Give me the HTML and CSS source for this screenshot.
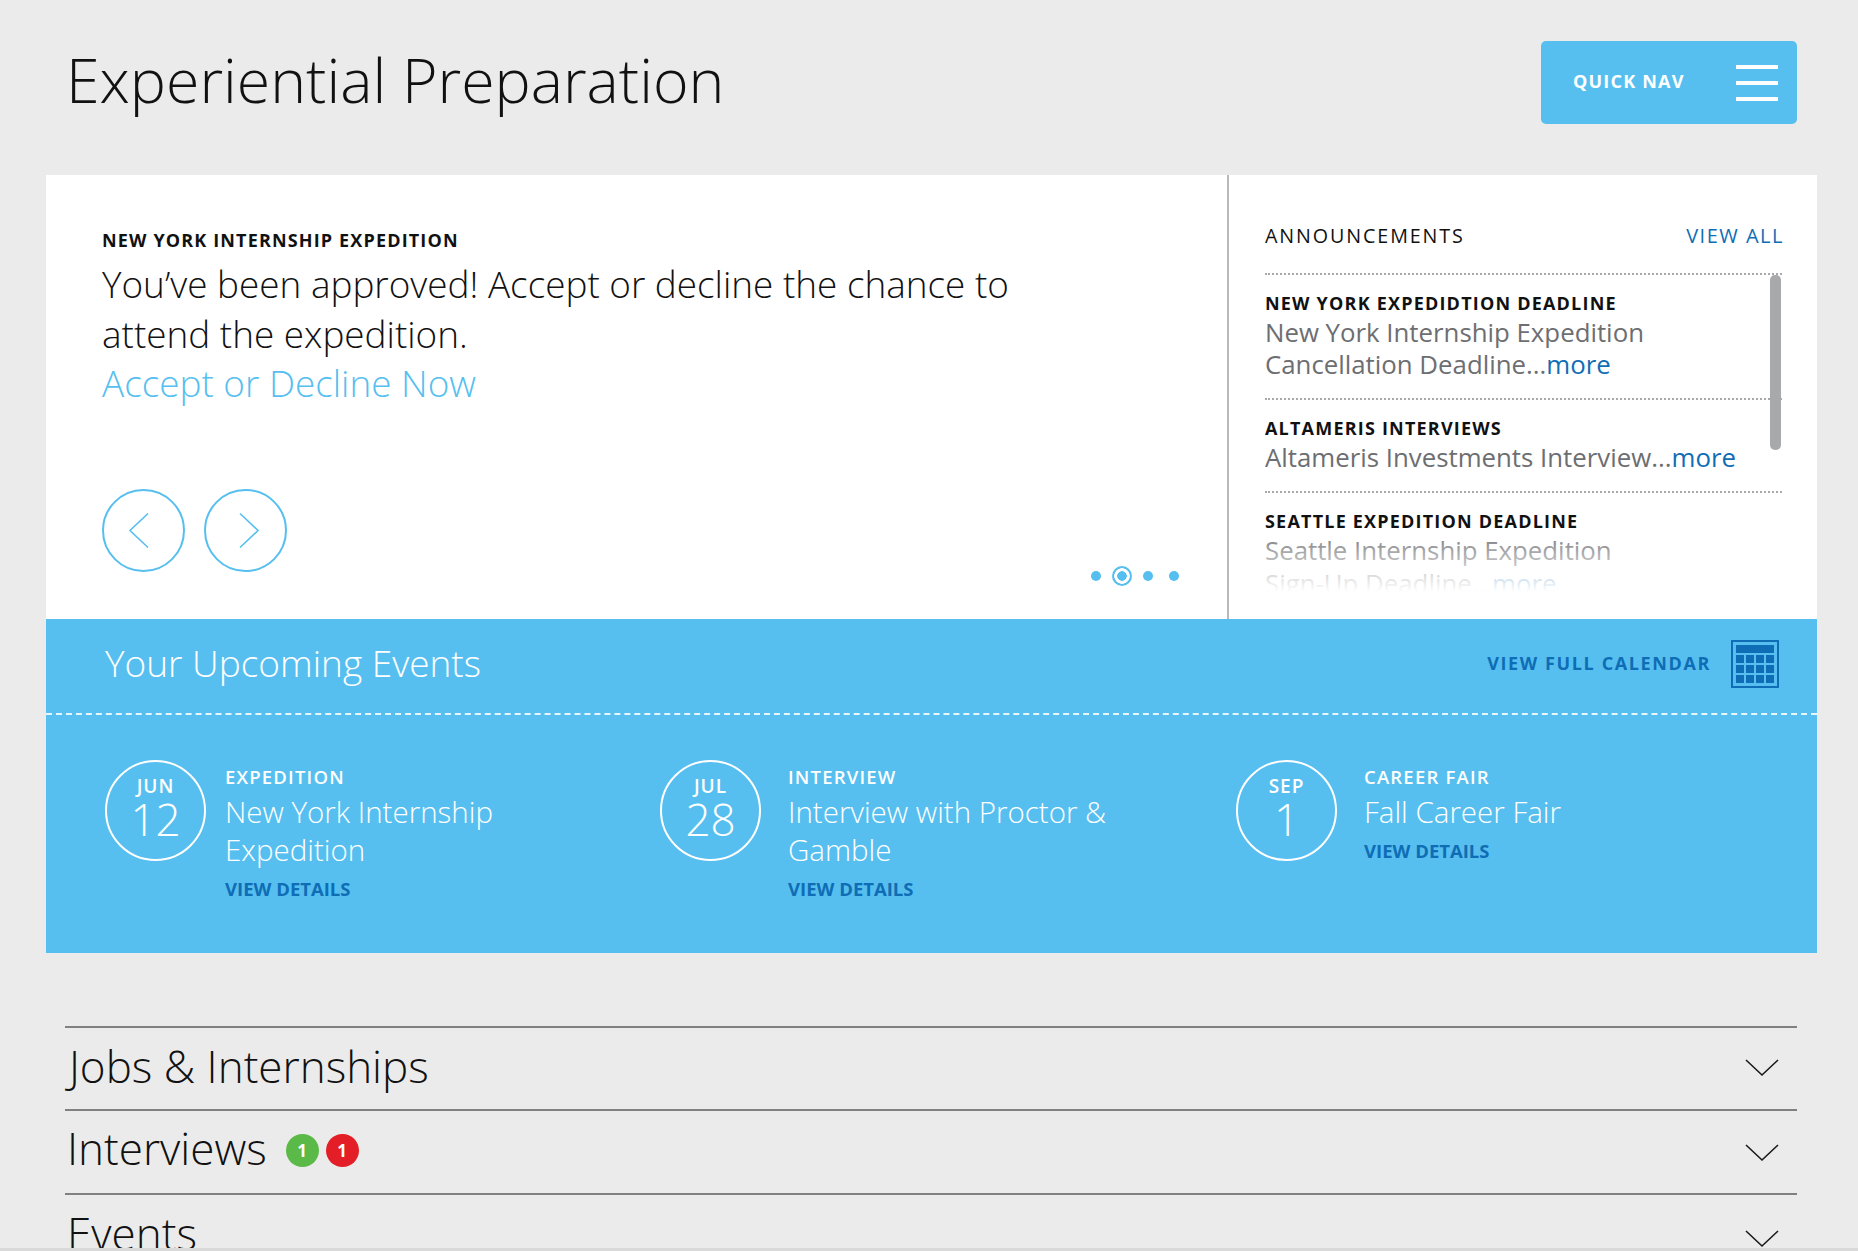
FILE: index.html
```html
<!DOCTYPE html>
<html lang="en">
<head>
<meta charset="utf-8">
<title>Experiential Preparation</title>
<link rel="stylesheet" href="styles.css">
</head>
<body>
<div class="page">
  <header class="top">
    <h1 class="page-title">Experiential Preparation</h1>
    <a class="quick-nav">
      <span class="quick-label">QUICK NAV</span>
      <span class="burger"><i></i><i></i><i></i></span>
    </a>
  </header>

  <section class="hero">
    <div class="feature">
      <div class="eyebrow">NEW YORK INTERNSHIP EXPEDITION</div>
      <p class="feature-text">You’ve been approved! Accept or decline the chance to attend the expedition.<br><a class="feature-link">Accept or Decline Now</a></p>
      <div class="feature-foot">
        <div class="arrows">
          <span class="arrow"><svg width="79" height="79" viewBox="0 0 79 79"><path d="M44 22.5 L26 39.5 L44 56.5" fill="none" stroke="#56bfef" stroke-width="1.6"/></svg></span>
          <span class="arrow"><svg width="79" height="79" viewBox="0 0 79 79"><path d="M34 22.5 L52 39.5 L34 56.5" fill="none" stroke="#56bfef" stroke-width="1.6"/></svg></span>
        </div>
        <div class="dots"><i class="dot"></i><i class="dot current"></i><i class="dot"></i><i class="dot"></i></div>
      </div>
    </div>
    <aside class="news">
      <div class="news-head"><span class="news-title">ANNOUNCEMENTS</span><a class="view-all">VIEW ALL</a></div>
      <div class="news-list">
        <div class="news-item">
          <h3 class="news-name">NEW YORK EXPEDIDTION DEADLINE</h3>
          <p class="news-text">New York Internship Expedition<br>Cancellation Deadline...<a class="more">more</a></p>
        </div>
        <div class="news-item">
          <h3 class="news-name">ALTAMERIS INTERVIEWS</h3>
          <p class="news-text">Altameris Investments Interview...<a class="more">more</a></p>
        </div>
        <div class="news-item item-last">
          <h3 class="news-name">SEATTLE EXPEDITION DEADLINE</h3>
          <p class="news-text">Seattle Internship Expedition<br>Sign-Up Deadline...<a class="more">more</a></p>
        </div>
        <div class="news-fade"></div>
        <div class="news-thumb"></div>
      </div>
    </aside>
  </section>

  <section class="events">
    <div class="events-head">
      <h2 class="events-title">Your Upcoming Events</h2>
      <a class="cal-link">VIEW FULL CALENDAR
        <svg class="cal-icon" width="48" height="48" viewBox="0 0 48 48">
          <rect x="1" y="1" width="46" height="46" fill="none" stroke="#0f6db5" stroke-width="2"/>
          <rect x="5" y="5" width="38" height="8" fill="#0f6db5"/>
          <g fill="#0f6db5">
            <rect x="5" y="15" width="8" height="8"/><rect x="15" y="15" width="8" height="8"/><rect x="25" y="15" width="8" height="8"/><rect x="35" y="15" width="8" height="8"/>
            <rect x="5" y="25" width="8" height="8"/><rect x="15" y="25" width="8" height="8"/><rect x="25" y="25" width="8" height="8"/><rect x="35" y="25" width="8" height="8"/>
            <rect x="5" y="35" width="8" height="8"/><rect x="15" y="35" width="8" height="8"/><rect x="25" y="35" width="8" height="8"/><rect x="35" y="35" width="8" height="8"/>
          </g>
        </svg>
      </a>
    </div>
    <div class="events-row">
      <article class="event ev-a">
        <div class="date"><span class="month">JUN</span><span class="day">12</span></div>
        <div class="event-body">
          <div class="event-type">EXPEDITION</div>
          <div class="event-name">New York Internship Expedition</div>
          <a class="event-link">VIEW DETAILS</a>
        </div>
      </article>
      <article class="event ev-b">
        <div class="date"><span class="month">JUL</span><span class="day">28</span></div>
        <div class="event-body">
          <div class="event-type">INTERVIEW</div>
          <div class="event-name">Interview with Proctor &amp; Gamble</div>
          <a class="event-link">VIEW DETAILS</a>
        </div>
      </article>
      <article class="event ev-c">
        <div class="date"><span class="month">SEP</span><span class="day">1</span></div>
        <div class="event-body">
          <div class="event-type">CAREER FAIR</div>
          <div class="event-name">Fall Career Fair</div>
          <a class="event-link">VIEW DETAILS</a>
        </div>
      </article>
    </div>
  </section>

  <section class="accordion">
    <div class="acc-row row-a">
      <span class="acc-title title-jobs">Jobs &amp; Internships</span>
      <svg class="chev chev-a" width="34" height="18" viewBox="0 0 34 18"><path d="M1 1 L17 16 L33 1" fill="none" stroke="#1a1a1a" stroke-width="1.6"/></svg>
    </div>
    <div class="acc-row row-b">
      <span class="acc-title">Interviews</span>
      <span class="badge green">1</span><span class="badge red">1</span>
      <svg class="chev chev-b" width="34" height="18" viewBox="0 0 34 18"><path d="M1 1 L17 16 L33 1" fill="none" stroke="#1a1a1a" stroke-width="1.6"/></svg>
    </div>
    <div class="acc-row row-c">
      <span class="acc-title">Events</span>
      <svg class="chev chev-c" width="34" height="18" viewBox="0 0 34 18"><path d="M1 1 L17 16 L33 1" fill="none" stroke="#1a1a1a" stroke-width="1.6"/></svg>
    </div>
  </section>
</div>
</body>
</html>
```
FILE: styles.css
```css
* { box-sizing: border-box; }
html, body { margin: 0; padding: 0; }
body { background: #ebebeb; font-family: "Open Sans", "Noto Sans", sans-serif; color: #111; overflow: hidden; }
.page { height: 1251px; overflow: hidden; border-bottom: 3px solid #d9d9d9; }
h1, h2, h3, p { margin: 0; font-weight: inherit; }

.top { height: 175px; display: flex; justify-content: space-between; align-items: flex-start; padding: 41px 61px 0 66px; }
.page-title { font-size: 60.8px; font-weight: 300; line-height: 78px; color: #111; letter-spacing: 0; }
.quick-nav { width: 256px; height: 83px; background: #56bfef; border-radius: 5px; display: flex; align-items: center; justify-content: space-between; padding: 0 19px 0 32px; color: #fff; }
.quick-label { font-size: 18px; font-weight: 700; letter-spacing: 1.2px; padding-bottom: 4px; }
.burger { display: flex; flex-direction: column; gap: 12px; width: 42px; }
.burger i { display: block; height: 4px; background: #fff; }

.hero { display: flex; height: 444px; margin: 0 41px 0 46px; background: #fff; }
.feature { width: 1181px; padding: 53px 40px 0 56px; display: flex; flex-direction: column; }
.eyebrow { font-size: 18px; font-weight: 700; letter-spacing: 1.15px; line-height: 24px; color: #111; }
.feature-text { font-size: 36.9px; font-weight: 300; line-height: 49.5px; margin-top: 8px; width: 940px; color: #111; }
.feature-link { color: #56bfef; }
.feature-foot { display: flex; justify-content: space-between; margin-top: 80px; }
.arrows { display: flex; gap: 19px; }
.arrow { width: 83px; height: 83px; border: 2px solid #56bfef; border-radius: 50%; display: flex; align-items: center; justify-content: center; }
.arrow svg { flex: none; }
.dots { display: flex; align-items: center; gap: 16px; margin-top: 77px; height: 20px; margin-right: 8px; }
.dot { width: 10px; height: 10px; border-radius: 50%; background: #56bfef; }
.dot.current { width: 20px; height: 20px; margin: 0 -5px; background: radial-gradient(circle, #56bfef 0 4.5px, #fff 5px 7.5px, #56bfef 8px); }

.news { width: 590px; border-left: 2px solid #b9b9b9; padding: 0 35px 0 36px; }
.news-head { display: flex; justify-content: space-between; align-items: center; height: 100px; padding-top: 22px; border-bottom: 2px dotted #a9a9a9; }
.news-title { font-size: 19.7px; letter-spacing: 1.9px; color: #111; }
.view-all { font-size: 20px; letter-spacing: 1.5px; color: #0f6db5; margin-right: -2px; }
.news-list { position: relative; height: 317px; overflow: hidden; }
.news-item { padding: 15.5px 0 17.5px; border-bottom: 2px dotted #a9a9a9; }
.item-last { border-bottom: 0; padding-top: 16.5px; }
.news-name { font-size: 18px; font-weight: 700; letter-spacing: 1.2px; line-height: 24px; margin-bottom: 1px; color: #111; }
.news-text { font-size: 25.8px; line-height: 32.5px; font-weight: 400; color: #6d6e71; }
.more { color: #0f6db5; }
.news-thumb { position: absolute; right: 1px; top: 0; width: 11px; height: 175px; border-radius: 5px; background: #a7a9ac; }
.news-fade { position: absolute; left: 0; right: 0; bottom: 0; height: 62px; background: linear-gradient(to bottom, rgba(255,255,255,0), rgba(255,255,255,.45) 40%, #fff 100%); }

.events { height: 334px; margin: 0 41px 0 46px; background: #56bfef; color: #fff; }
.events-head { height: 96px; border-bottom: 2px dashed #e6f6fd; display: flex; justify-content: space-between; align-items: center; padding: 0 38px 6px 59px; }
.events-title { font-size: 37px; font-weight: 300; color: #fff; margin-bottom: 2px; }
.cal-link { display: flex; align-items: center; gap: 20px; font-size: 18px; font-weight: 700; letter-spacing: 1.62px; color: #0f6db5; }
.cal-icon { display: block; margin-top: 2px; }
.events-row { display: flex; padding: 45px 0 0 59px; }
.event { display: flex; align-items: flex-start; gap: 19px; }
.ev-a { width: 555px; }
.ev-b { width: 576px; gap: 27px; }
.ev-c { gap: 27px; }
.date { width: 101px; height: 101px; flex: none; border: 2px solid #fff; border-radius: 50%; display: flex; flex-direction: column; align-items: center; padding-top: 12px; }
.month { font-size: 19px; font-weight: 600; line-height: 24px; letter-spacing: 1px; }
.day { font-size: 44px; font-weight: 300; line-height: 44px; margin-top: -1px; }
.event-body { width: 400px; padding-top: 4px; }
.event-type { font-size: 18.5px; font-weight: 600; letter-spacing: 1.2px; line-height: 26px; }
.event-name { font-size: 29.5px; font-weight: 300; line-height: 38px; width: 340px; margin-top: 3px; }
.event-link { display: block; font-size: 18.5px; font-weight: 700; color: #0f6db5; line-height: 24px; margin-top: 8px; }

.accordion { margin: 73px 61px 0 65px; }
.acc-row { border-top: 2px solid #808080; display: flex; align-items: center; padding: 0 0 6px 2px; }
.row-a { height: 83px; }
.row-b { height: 84px; padding-bottom: 8px; }
.row-c { height: 84px; }
.acc-title { font-size: 44px; font-weight: 300; color: #111; line-height: 60px; }
.title-jobs { margin-left: 2px; }
.badge { width: 33px; height: 33px; border-radius: 50%; color: #fff; font-size: 17px; font-weight: 700; display: flex; align-items: center; justify-content: center; margin-left: 7px; position: relative; top: 2px; }
.badge.green { background: #5bb947; margin-left: 19px; }
.badge.red { background: #e31e26; }
.chev { margin-left: auto; margin-right: 18px; flex: none; align-self: flex-start; }
.chev-a { margin-top: 31px; }
.chev-b { margin-top: 33px; }
.chev-c { margin-top: 35px; }
```
